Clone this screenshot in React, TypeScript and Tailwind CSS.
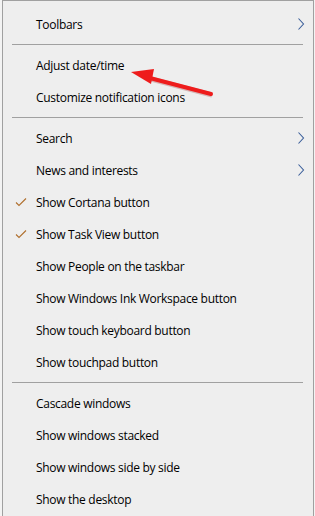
import { Fragment } from "react";

type Item = { label: string; checked?: boolean; sub?: boolean };

const groups: Item[][] = [
  [{ label: "Toolbars", sub: true }],
  [{ label: "Adjust date/time" }, { label: "Customize notification icons" }],
  [
    { label: "Search", sub: true },
    { label: "News and interests", sub: true },
    { label: "Show Cortana button", checked: true },
    { label: "Show Task View button", checked: true },
    { label: "Show People on the taskbar" },
    { label: "Show Windows Ink Workspace button" },
    { label: "Show touch keyboard button" },
    { label: "Show touchpad button" },
  ],
  [
    { label: "Cascade windows" },
    { label: "Show windows stacked" },
    { label: "Show windows side by side" },
    { label: "Show the desktop" },
  ],
];

const Check = () => (
  <svg width="12" height="10" viewBox="0 0 12 10" className="absolute left-[12px] top-[11px]">
    <polyline points="1,5.5 4,8.5 11,1.5" fill="none" stroke="#b0702e" strokeWidth="1.1" />
  </svg>
);

const Chevron = () => (
  <svg width="8" height="12" viewBox="0 0 8 12" className="absolute left-[294px] top-[10px]">
    <polyline points="1.5,0.5 6.5,6 1.5,11.5" fill="none" stroke="#3b5f9a" strokeWidth="1.1" />
  </svg>
);

const Row = ({ item }: { item: Item }) => (
  <div className="relative h-[32px] flex items-center pl-[33px] pt-[2px] text-[12px] tracking-[-0.3px] text-black">
    {item.checked && <Check />}
    <span>{item.label}</span>
    {item.sub && <Chevron />}
  </div>
);

const Separator = () => (
  <div className="h-[9px] flex items-center pl-[9px] pr-[10px]">
    <div className="h-px w-full bg-[#a0a0a0]" />
  </div>
);

export default function App() {
  return (
    <div
      className="w-[315px] h-[516px] overflow-hidden bg-[#f3f3f3] pl-[2px] pr-[1px]"
      style={{ fontFamily: '"Open Sans", "Noto Sans", sans-serif' }}
    >
      <div className="relative h-[530px] bg-[#eeeeee] border-l border-t border-r border-[#a0a0a0] pt-[7px]">
        {groups.map((group, i) => (
          <Fragment key={i}>
            {i > 0 && <Separator />}
            {group.map((item) => (
              <Row key={item.label} item={item} />
            ))}
          </Fragment>
        ))}
        {/* red annotation arrow */}
        <svg width="315" height="516" className="absolute -left-[3px] -top-px pointer-events-none">
          <line x1="211" y1="94" x2="146" y2="77" stroke="#8a1010" strokeOpacity="0.25" strokeWidth="5" transform="translate(1,1)" />
          <line x1="211" y1="94" x2="146" y2="77" stroke="#ee1c1c" strokeWidth="4" strokeLinecap="round" />
          <polygon points="131,72 154,69 151,84" fill="#ee1c1c" />
        </svg>
      </div>
    </div>
  );
}
